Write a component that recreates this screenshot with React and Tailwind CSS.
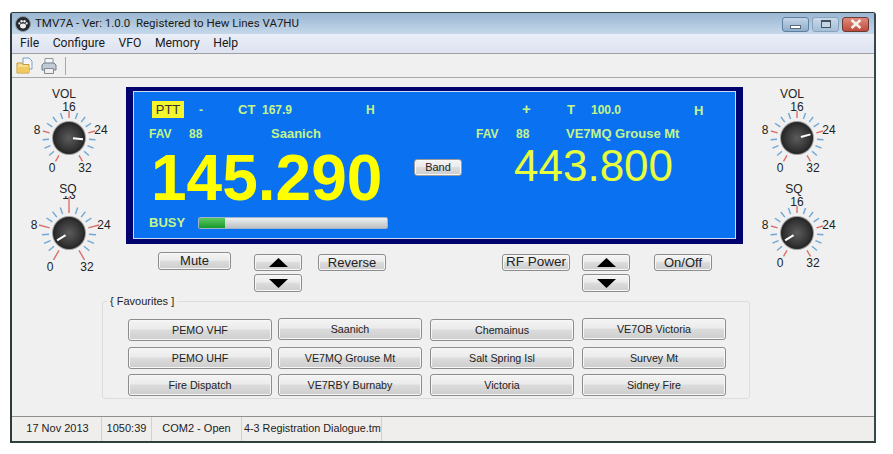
import React from "react";

const btn =
  "flex items-center justify-center border border-[#8c8c8c] rounded-[3px] text-[#222] bg-[linear-gradient(#f4f4f4_0%,#ebebeb_45%,#dcdcdc_50%,#cdcdcd_100%)] shadow-[inset_0_0_0_1px_#f7f7f7]";

const favourites = [
  ["PEMO VHF", "Saanich", "Chemainus", "VE7OB Victoria"],
  ["PEMO UHF", "VE7MQ Grouse Mt", "Salt Spring Isl", "Survey Mt"],
  ["Fire Dispatch", "VE7RBY Burnaby", "Victoria", "Sidney Fire"],
];

function Knob({ title, angle, cx, wide, clipped, titleDx = -5 }) {
  const cy = 54;
  const ticks = [];
  for (let i = 0; i <= 16; i++) {
    const deg = -150 + i * 18.75;
    const a = (deg * Math.PI) / 180;
    const red = i % 4 === 0;
    const r1 = 20;
    const r2 = red ? (wide ? (i === 8 ? 36 : 31) : 27) : wide ? 27 : 26.5;
    ticks.push(
      <line
        key={i}
        x1={cx + r1 * Math.sin(a)}
        y1={cy - r1 * Math.cos(a)}
        x2={cx + r2 * Math.sin(a)}
        y2={cy - r2 * Math.cos(a)}
        stroke={red ? "#d9706c" : "#6fa6d6"}
        strokeWidth="1.4"
      />
    );
  }
  const p = (angle * Math.PI) / 180;
  const ox = wide ? 35 : 32;
  const oy = wide ? 34 : 30;
  const id = `clip-${title}-${cx}`;
  return (
    <svg width="112" height="95" className="block font-['Liberation_Sans',sans-serif] text-[12px]" fill="#222">
      <defs>
        <radialGradient id={id + "g"} cx="50%" cy="50%" r="55%">
          <stop offset="0%" stopColor="#5c5c5c" />
          <stop offset="70%" stopColor="#333" />
          <stop offset="100%" stopColor="#1c1c1c" />
        </radialGradient>
        <clipPath id={id}>
          <rect x="0" y="17" width="112" height="20" />
        </clipPath>
      </defs>
      <text x={cx + titleDx} y={cy - 40} textAnchor="middle" fontSize="12">{title}</text>
      {clipped ? (
        <g clipPath={`url(#${id})`}>
          <text x={cx} y={cy - 34} textAnchor="middle">16</text>
        </g>
      ) : (
        <text x={cx} y={cy - 27} textAnchor="middle">16</text>
      )}
      <text x={cx - ox} y={cy - 4} textAnchor="middle">8</text>
      <text x={cx + ox} y={cy - 4} textAnchor="middle">24</text>
      <text x={cx - (wide ? 19 : 17)} y={cy + oy + 4} textAnchor="middle">0</text>
      <text x={cx + (wide ? 18 : 16)} y={cy + oy + 4} textAnchor="middle">32</text>
      {ticks}
      <circle cx={cx} cy={cy} r="17" fill="#9a9a9a" />
      <circle cx={cx} cy={cy} r="16" fill={`url(#${id}g)`} />
      <line
        x1={cx + 4 * Math.sin(p)}
        y1={cy - 4 * Math.cos(p)}
        x2={cx + 14 * Math.sin(p)}
        y2={cy - 14 * Math.cos(p)}
        stroke="#fff"
        strokeWidth="2"
      />
    </svg>
  );
}

function Arrows({ className }) {
  return (
    <div className={`w-12 flex flex-col gap-[3px] mt-[2px] ${className}`}>
      <div className={`${btn} h-[17px]`}>
        <svg width="19" height="9"><polygon points="9.5,0 19,9 0,9" fill="#000" /></svg>
      </div>
      <div className={`${btn} h-[18px]`}>
        <svg width="19" height="9"><polygon points="0,0 19,0 9.5,9" fill="#000" /></svg>
      </div>
    </div>
  );
}

function WindowControls() {
  return (
    <div className="flex gap-[3px] ml-auto mr-[5px] mt-[1px]">
      <div className="w-[27px] h-[15px] rounded-[3px] border border-[#5f7f9f] bg-linear-to-b from-[#c3d5e8] to-[#8fadcc] flex items-end justify-center pb-[2px]">
        <div className="w-[11px] h-[4px] bg-white border border-[#5a6a7a]" />
      </div>
      <div className="w-[27px] h-[15px] rounded-[3px] border border-[#86a3c0] bg-linear-to-b from-[#c9d9ea] to-[#a5bed7] flex items-center justify-center">
        <div className="w-[10px] h-[8px] border border-[#44525f] border-t-2 bg-[#c3d4e6]" />
      </div>
      <div className="w-[27px] h-[15px] rounded-[3px] border border-[#6b3a35] bg-linear-to-b from-[#e0897a] to-[#bf4a3c] flex items-center justify-center">
        <svg width="12" height="10">
          <path d="M1.5 1 L10.5 9 M10.5 1 L1.5 9" stroke="#f5efee" strokeWidth="2.6" />
        </svg>
      </div>
    </div>
  );
}

export default function App() {
  return (
    <div className="w-[893px] h-[454px] bg-white pt-[12px] pl-[10px] overflow-hidden font-['Liberation_Sans',sans-serif]">
      <div className="w-[866px] h-[431px] flex flex-col border-2 border-t border-[#2e3a3c] border-r-[#37484d] rounded-t-[3px] border-b-[#2f4038] bg-[#f0f0f0]">
        {/* title bar */}
        <div className="h-[21px] flex items-center pl-[3px] bg-linear-to-b from-[#9ab6d2] to-[#c5d8ea] shrink-0">
          <svg width="16" height="16" viewBox="0 0 16 16" className="shrink-0">
            <circle cx="8" cy="8" r="7.5" fill="#26292e" stroke="#8b9aa8" />
            <ellipse cx="8" cy="10" rx="3" ry="2.4" fill="#eee" />
            <circle cx="4.3" cy="7.4" r="1.1" fill="#eee" />
            <circle cx="6.6" cy="5.2" r="1.2" fill="#eee" />
            <circle cx="9.5" cy="5.2" r="1.2" fill="#eee" />
            <circle cx="11.7" cy="7.4" r="1.1" fill="#eee" />
          </svg>
          <span className="ml-[4px] text-[11.5px] text-[#1a1a1a] whitespace-pre font-['Roboto',sans-serif]">
            TMV7A - Ver: 1.0.0  Registered to Hew Lines VA7HU
          </span>
          <WindowControls />
        </div>
        {/* menu */}
        <div className="h-[20px] flex items-center pl-[8px] gap-[13.5px] text-[12.2px] text-[#1a1a1a] font-['Roboto',sans-serif] border-b border-[#a0a0a0] bg-linear-to-b from-[#eaeef8] to-[#dde3f0] shrink-0">
          <span>File</span>
          <span>Configure</span>
          <span>VFO</span>
          <span>Memory</span>
          <span>Help</span>
        </div>
        {/* toolbar */}
        <div className="h-[24px] flex items-center pl-[4px] border-b border-[#a8a8a8] shrink-0">
          <svg width="18" height="18" viewBox="0 0 18 18">
            <path d="M7 1h6l3 3v8H7z" fill="#f4f7fb" stroke="#7f9fc4" />
            <path d="M1 6h5l1 1.5h6V16H1z" fill="#f6dc8e" stroke="#c49a3a" />
            <path d="M1.5 10h11.5v5.5H1.5z" fill="#f2c95f" />
          </svg>
          <svg width="18" height="18" viewBox="0 0 18 18" className="ml-[6px]">
            <path d="M5 1.5h8v6H5z" fill="#f6f6f6" stroke="#8b98a6" />
            <path d="M2 8l2-2h10l2 2v5H2z" fill="#c2cbd5" stroke="#6f7c8a" />
            <path d="M4.5 11.5h9v5h-9z" fill="#eef0f2" stroke="#7f8b97" />
          </svg>
          <div className="w-px h-[18px] bg-[#a8a8a8] ml-[7px]" />
        </div>
        {/* main */}
        <div className="flex-1 pt-[6px]">
          <div className="flex h-[211px]">
            <div className="w-[114px] shrink-0 pl-[2px]">
              <Knob title="VOL" angle={95} cx={55} />
              <Knob title="SQ" angle={-122} cx={55} wide clipped titleDx={-1} />
            </div>
            <div className="w-[617px] shrink-0 flex flex-col">
              {/* display */}
              <div className="mt-[3px] h-[157px] border-x-[7px] border-t-[4px] border-b-[5px] border-[#02026e]">
                <div className="h-full flex border border-[#c9dcf2] bg-[#0a72f0] font-bold text-[12px] text-[#c4f58a]">
                  <div className="w-[280px] shrink-0 pl-[15px] pt-[9px] flex flex-col">
                    <div className="flex items-center h-[17px] pl-[3px]">
                      <span className="w-[32px] h-[17px] bg-[#f5f52e] text-[#333] text-center font-normal text-[13px] leading-[17px]">PTT</span>
                      <span className="ml-[15px] w-[39px]">-</span>
                      <span className="w-[24px] text-[13px]">CT</span>
                      <span className="w-[104px]">167.9</span>
                      <span>H</span>
                    </div>
                    <div className="flex items-center h-[16px] mt-[8px]">
                      <span className="w-[40px]">FAV</span>
                      <span className="w-[82px]">88</span>
                      <span className="text-[13px]">Saanich</span>
                    </div>
                    <div className="text-[#ffff00] text-[64px] leading-[60px] h-[60px] pl-[2px] mt-[6px]">145.290</div>
                    <div className="flex items-center h-[14px] mt-[8px]">
                      <span className="w-[49px] text-[13px]">BUSY</span>
                      <div className="w-[190px] h-[12px] rounded-[2px] border border-[#9fb4c8] bg-linear-to-b from-[#eef0f2] to-[#bcc0c4]">
                        <div className="w-[26px] h-full bg-linear-to-b from-[#58c860] to-[#0f9a2c]" />
                      </div>
                    </div>
                  </div>
                  <div className="w-[48px] shrink-0 pt-[67px]">
                    <div className={`${btn} h-[17px] font-normal text-[11px] border-[#9a9a9a]`}>Band</div>
                  </div>
                  <div className="flex-1 pl-[14px] pt-[9px]">
                    <div className="flex items-center h-[17px] pl-[46px]">
                      <span className="w-[45px] text-[15px]">+</span>
                      <span className="w-[24px] text-[13px]">T</span>
                      <span className="w-[103px]">100.0</span>
                      <span className="text-[13px] mt-[3px]">H</span>
                    </div>
                    <div className="flex items-center h-[16px] mt-[8px]">
                      <span className="w-[40px]">FAV</span>
                      <span className="w-[50px]">88</span>
                      <span className="text-[13px]">VE7MQ Grouse Mt</span>
                    </div>
                    <div className="text-[#e8ff3c] text-[44px] font-normal leading-[40px] pl-[38px] mt-[4px]">443.800</div>
                  </div>
                </div>
              </div>
              {/* controls */}
              <div className="flex items-start mt-[8px] text-[13px]">
                <div className={`${btn} ml-[32px] w-[73px] h-[18px]`}>Mute</div>
                <Arrows className="ml-[23px]" />
                <div className={`${btn} ml-[16px] mt-[2px] w-[68px] h-[17px]`}>Reverse</div>
                <div className={`${btn} ml-[116px] mt-[2px] w-[68px] h-[17px] text-[13.5px]`}>RF Power</div>
                <Arrows className="ml-[12px]" />
                <div className={`${btn} ml-[24px] mt-[2px] w-[58px] h-[17px]`}>On/Off</div>
              </div>
            </div>
            <div className="flex-1">
              <Knob title="VOL" angle={75} cx={54} titleDx={-5} />
              <Knob title="SQ" angle={-122} cx={54} titleDx={-3} />
            </div>
          </div>
          {/* favourites */}
          <fieldset className="ml-[90px] w-[648px] h-[104px] border border-[#dcdcdc] rounded-[3px]">
            <legend className="ml-[4px] px-[3px] text-[11px] leading-[12px] text-[#222]">{"{ Favourites ]"}</legend>
            <div className="flex flex-col gap-[5px] pt-[12px] pl-[25px]">
              {favourites.map((row, i) => (
                <div key={i} className={`flex items-start gap-[6px] ${i === 1 ? "mt-px" : ""}`}>
                  {row.map((name, j) => (
                    <div
                      key={name}
                      className={`${btn} w-[144px] h-[22px] text-[10.7px] ${j === 2 ? "ml-[2px]" : ""} ${j === 3 ? "ml-[2px]" : ""} ${i === 0 && j % 2 === 1 ? "-mt-px" : ""}`}
                    >
                      {name}
                    </div>
                  ))}
                </div>
              ))}
            </div>
          </fieldset>
        </div>
        {/* status bar */}
        <div className="h-[25px] flex items-center border-t border-[#8f8f8f] bg-[#f0eeed] text-[11px] text-[#222] shrink-0">
          <div className="w-[90px] pl-[2px] text-center border-r border-[#d0d0d0] h-full leading-[23px]">17 Nov 2013</div>
          <div className="w-[50px] text-center border-r border-[#d0d0d0] h-full leading-[23px]">1050:39</div>
          <div className="w-[90px] text-center border-r border-[#d0d0d0] h-full leading-[23px]">COM2 - Open</div>
          <div className="w-[140px] pl-[2px] text-[10.8px] border-r border-[#d0d0d0] h-full leading-[23px] whitespace-nowrap overflow-hidden">4-3 Registration Dialogue.tmv</div>
        </div>
      </div>
    </div>
  );
}
